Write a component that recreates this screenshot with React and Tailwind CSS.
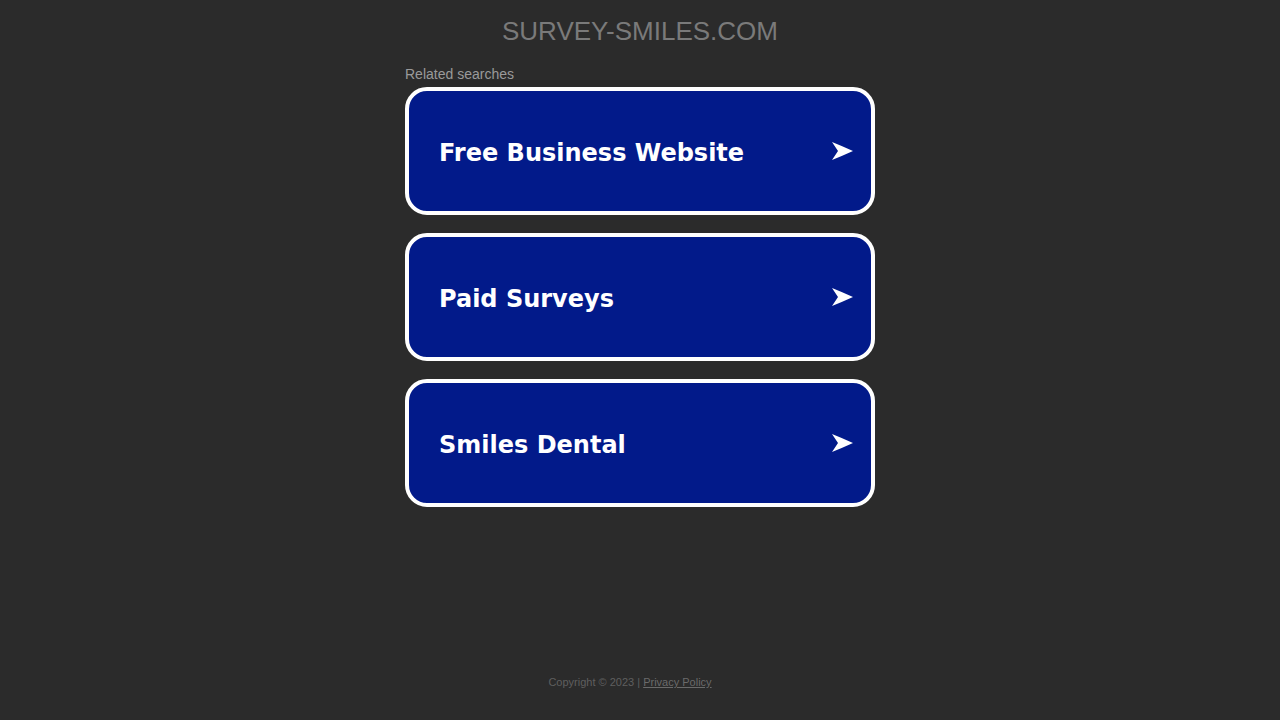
import React from 'react';

const searches = ['Free Business Website', 'Paid Surveys', 'Smiles Dental'];

export default function App() {
  return (
    <div className="min-h-screen bg-[#2b2b2b] flex flex-col items-center font-['Liberation_Sans',Arial,sans-serif]">
      <h1 className="mt-[15px] text-[26px] leading-[32px] text-[#7a7a7a]">SURVEY-SMILES.COM</h1>

      <div className="w-[470px] mt-[19px]">
        <p className="text-[14px] leading-[16px] text-[#9a9a9a]">Related searches</p>
        <div className="flex flex-col gap-[18px] mt-[5px]">
          {searches.map((s) => (
            <a
              key={s}
              href="#"
              className="h-[128px] rounded-[22px] border-[4px] border-white bg-[#021a8a] flex items-center justify-between pl-[30px] pr-[18px] pt-[3px]"
            >
              <span className="text-white font-bold text-[24px] leading-none font-['DejaVu_Sans',Verdana,sans-serif]">
                {s}
              </span>
              <svg width="21" height="18" viewBox="0 0 21 18" className="mb-[3px]">
                <path d="M0 0 Q10 4 21 9 Q10 14 0 18 L6 9 Z" fill="white" />
              </svg>
            </a>
          ))}
        </div>
      </div>

      <div className="mt-auto mb-[31px] pr-[20px] text-[11px] leading-[14px] text-[#5f5f5f]">
        Copyright © 2023 | <a href="#" className="underline text-[#6a6a6a]">Privacy Policy</a>
      </div>
    </div>
  );
}
